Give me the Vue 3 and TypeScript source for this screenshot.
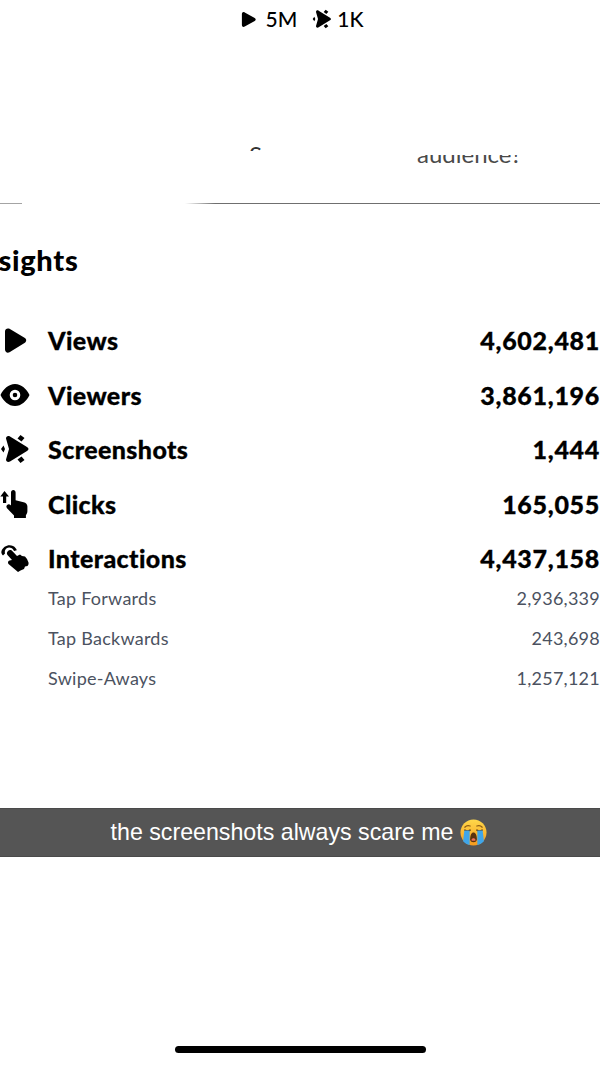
<script setup lang="ts">
type Metric = { key: string; label: string; value: string };
type SubMetric = { label: string; value: string };

const metrics: Metric[] = [
  { key: 'views', label: 'Views', value: '4,602,481' },
  { key: 'viewers', label: 'Viewers', value: '3,861,196' },
  { key: 'screenshots', label: 'Screenshots', value: '1,444' },
  { key: 'clicks', label: 'Clicks', value: '165,055' },
  { key: 'interactions', label: 'Interactions', value: '4,437,158' },
];

const subMetrics: SubMetric[] = [
  { label: 'Tap Forwards', value: '2,936,339' },
  { label: 'Tap Backwards', value: '243,698' },
  { label: 'Swipe-Aways', value: '1,257,121' },
];
</script>

<template>
  <main class="page">
    <svg class="defs" width="0" height="0" aria-hidden="true">
      <symbol id="shot-icon" viewBox="0 0 30 30">
        <path d="M6 4.500C6 2.300 8 1.400 10 2.500l17 10.500c2 1.300 2 2.700 0 4L10 27.500C8 28.600 6 27.700 6 25.500L9 15z" />
        <path d="M20.500 1l4 3-3 3.500-4-3zM20.500 29l4-3-3-3.500-4 3zM3.500 11.500l1.500 3.500-1.500 3.500L1 15z" />
      </symbol>
    </svg>

    <header class="top-stats">
      <span class="stat">
        <svg class="stat-icon" viewBox="0 0 18 18"><path d="M2 3.200C2 1.400 3.600.6 5 1.500l10.600 5.900c1.400.8 1.400 2.400 0 3.200L5 16.500c-1.400.9-3 .1-3-1.700z" /></svg>
        5M
      </span>
      <span class="stat second">
        <svg class="stat-icon wide" viewBox="0 0 30 30"><use href="#shot-icon" /></svg>
        1K
      </span>
    </header>

    <div class="teaser">
      <span class="clip clip-top"><span>S</span></span>
      <span class="clip clip-bottom"><span>audience?</span></span>
    </div>

    <div class="divider">
      <span class="line short"></span>
      <span class="line long"></span>
    </div>

    <h2 class="title">Insights</h2>

    <section class="metrics">
      <div v-for="m in metrics" :key="m.key" class="metric">
        <span class="metric-icon">
          <svg v-if="m.key === 'views'" viewBox="0 0 30 30"><path d="M5 6.500C5 3.800 7.500 2.700 9.500 3.800l15 9c2.300 1.300 2.300 3.900 0 5.200l-15 9.200C7.500 28.400 5 27.200 5 24.500z" /></svg>
          <svg v-else-if="m.key === 'viewers'" viewBox="0 0 30 30"><path fill-rule="evenodd" d="M15 4C8.500 4 3.300 9 .5 15c2.800 6 8 11 14.500 11s11.700-5 14.500-11C26.700 9 21.500 4 15 4zm0 5.700a5.300 5.300 0 1 1 0 10.600 5.300 5.300 0 0 1 0-10.600zm0 3a2.300 2.300 0 1 0 0 4.600 2.300 2.300 0 0 0 0-4.600z" /></svg>
          <svg v-else-if="m.key === 'screenshots'" viewBox="0 0 30 30"><use href="#shot-icon" /></svg>
          <svg v-else-if="m.key === 'clicks'" viewBox="0 0 30 30">
            <path d="M4.500 2l4.500 5.500H6.200V14H3V7.500H.3z" />
            <path d="M11 3.500c0-1.400 1-2.500 2.300-2.500s2.300 1.100 2.300 2.500v7.700l8 2c2.300.6 3.800 2 3.800 4.300v4.500c0 1.600-.6 3-1.500 4.200V29H14v-2.500l-7-7.300c-.9-1-.8-2.400.1-3.300 1-.9 2.400-.9 3.400 0l.5.500z" />
          </svg>
          <svg v-else viewBox="0 0 30 30">
            <path d="M1.500 8C3 3.200 8.800.8 13 3c2 1 3.300 2.600 3.800 4.300l-2.700.8C13.500 6.800 12.600 5.700 11.300 5 8.800 3.700 5.900 5 5 7.500c-.3 1-.3 2 0 3L3 12.500C1.500 11 1 9.500 1.500 8z" />
            <path d="M8 8c1.500-1.500 3.500-1 4.500.3L17 13l3-1.500 2 1.500 3 .5 2 2.500 1.500 3.500c.3 1.500-.2 2.800-1 3.500l-2.500.5-1 2.500-3.500 1.500-2.500 1.500-9.500-8c-1-1.200-.5-3 1-3.500l2.500-.5L7.500 12C6.500 10.800 6.800 9 8 8z" />
          </svg>
        </span>
        <span class="metric-label">{{ m.label }}</span>
        <span class="metric-value">{{ m.value }}</span>
      </div>
    </section>

    <section class="sub-metrics">
      <div v-for="s in subMetrics" :key="s.label" class="sub-metric">
        <span>{{ s.label }}</span>
        <span class="sub-value">{{ s.value }}</span>
      </div>
    </section>

    <div class="caption">
      <span>the screenshots always scare me</span>
      <svg class="emoji" viewBox="0 0 28 28" aria-hidden="true">
        <defs>
          <linearGradient id="face" x1="0" y1="0" x2="0" y2="1">
            <stop offset="0" stop-color="#ffd84a" />
            <stop offset="1" stop-color="#f59a1e" />
          </linearGradient>
        </defs>
        <circle cx="14" cy="14" r="13.500" fill="url(#face)" />
        <path d="M5 8.500c1.500-1.600 3.600-2 5.500-1.200M23 8.500c-1.500-1.600-3.600-2-5.500-1.200" fill="none" stroke="#8a5a14" stroke-width="1.300" stroke-linecap="round" />
        <path d="M5 11.500q2.700 2 5.500 0M17.500 11.500q2.800 2 5.500 0" fill="none" stroke="#5b3b10" stroke-width="1.500" stroke-linecap="round" />
        <path d="M4.500 12H10v15c-2.500-.4-5-1.800-6.800-3.800zM18 12h5.500l1.300 11.200c-1.800 2-4.300 3.400-6.800 3.800z" fill="#3fa6ea" />
        <path d="M10.500 21c0-4.200 1.500-7 3.500-7s3.500 2.800 3.500 7c0 2-1.500 3-3.500 3s-3.500-1-3.500-3z" fill="#5a3310" />
        <path d="M11.800 22c.4-1.500 1.200-2 2.200-2s1.800.5 2.200 2c-.6.900-3.800.9-4.400 0z" fill="#f0705a" />
      </svg>
    </div>

    <div class="home-bar"></div>
  </main>
</template>

<style>
html,
body {
  margin: 0;
  background: #fff;
}
</style>

<style scoped>
.page {
  width: 600px;
  height: 1066px;
  overflow: hidden;
  position: relative;
  background: #fff;
  color: #000;
  font-family: Lato, "Open Sans", sans-serif;
}

.defs {
  position: absolute;
}

.top-stats {
  height: 38px;
  padding-left: 3px;
  box-sizing: border-box;
  display: flex;
  align-items: center;
  justify-content: center;
  font-size: 21px;
  font-weight: 500;
  line-height: 36px;
}

.stat {
  display: flex;
  align-items: center;
  gap: 9px;
}

.second {
  margin-left: 15px;
  gap: 5px;
}

.stat-icon {
  width: 17px;
  height: 17px;
  fill: #000;
}

.stat-icon.wide {
  width: 20px;
  height: 20px;
}

.teaser {
  display: flex;
  height: 16px;
  margin-top: 109px;
  padding-left: 249px;
  color: #4a4a4a;
  font-size: 24px;
  line-height: 28px;
}

.clip {
  display: block;
  overflow: hidden;
}

.clip-top {
  height: 4px;
  width: 13px;
  color: #333;
}

.clip-top span {
  display: block;
  margin-top: -6px;
}

.clip-bottom {
  height: 8px;
  margin-top: 8px;
  margin-left: 155px;
}

.clip-bottom span {
  display: block;
  margin-top: -15px;
}

.divider {
  display: flex;
  gap: 163px;
  margin-top: 40px;
  height: 1px;
}

.line {
  display: block;
  height: 1px;
  background: #7b7b7b;
}

.short {
  width: 22px;
  background: #a4a4a4;
}

.long {
  flex: 1;
  background: linear-gradient(90deg, #fff, #6f6f6f 30px);
}

.title {
  margin: 39px 0 0 -28px;
  font-size: 29px;
  line-height: 34px;
  font-weight: 900;
  letter-spacing: 0.7px;
}

.metrics {
  margin-top: 36px;
}

.metric {
  display: flex;
  align-items: center;
  height: 54.5px;
  font-size: 25px;
  font-weight: 900;
  -webkit-text-stroke: 0.3px #000;
}

.metric-icon {
  flex: none;
  width: 30px;
  height: 30px;
  margin-right: 18px;
}

.metric-icon svg {
  display: block;
  width: 30px;
  height: 30px;
  fill: #000;
}

.metric-label {
  flex: 1;
  letter-spacing: 0.4px;
}

.metric-value {
  letter-spacing: 0.7px;
}

.sub-metrics {
  margin-top: -8px;
  padding-left: 48px;
  color: #4b5260;
  font-size: 18px;
  letter-spacing: 0.25px;
}

.sub-metric {
  display: flex;
  justify-content: space-between;
  align-items: center;
  height: 40px;
}

.caption {
  display: flex;
  align-items: center;
  justify-content: center;
  gap: 7px;
  box-sizing: border-box;
  height: 49px;
  margin-top: 110px;
  padding-top: 1px;
  padding-right: 2px;
  background: #555;
  border-top: 1px solid #4a4a4a;
  border-bottom: 1px solid #4a4a4a;
  color: #fff;
  font-family: "Liberation Sans", Arial, sans-serif;
  font-size: 23.2px;
}

.emoji {
  width: 27px;
  height: 27px;
}

.home-bar {
  width: 251px;
  height: 7px;
  margin: 189px auto 0;
  border-radius: 4px;
  background: #000;
}
</style>
